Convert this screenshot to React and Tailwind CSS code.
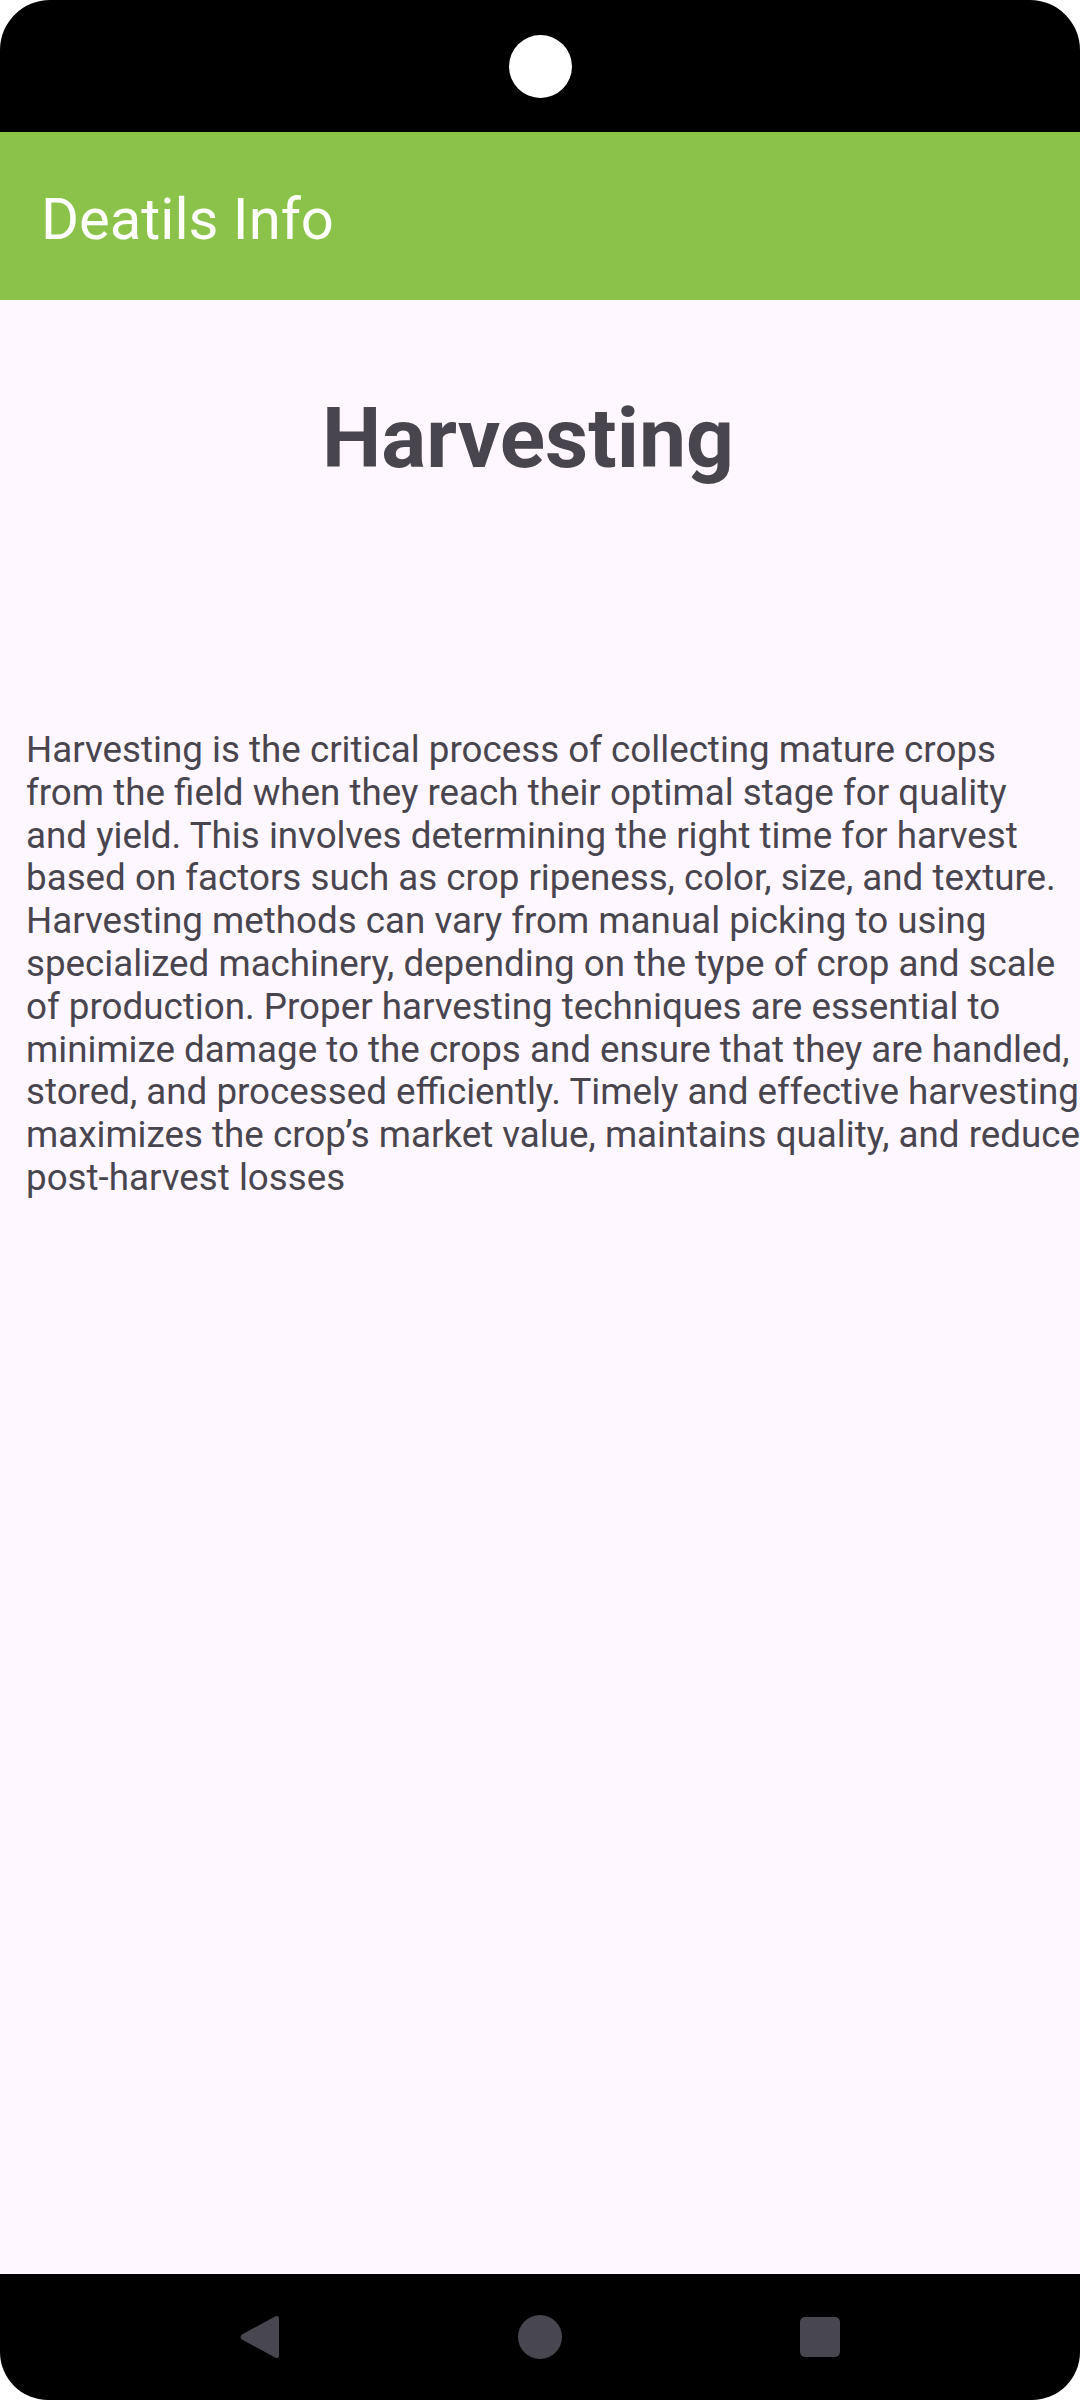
const lines = [
  'Harvesting is the critical process of collecting mature crops',
  'from the field when they reach their optimal stage for quality',
  'and yield. This involves determining the right time for harvest',
  'based on factors such as crop ripeness, color, size, and texture.',
  'Harvesting methods can vary from manual picking to using',
  'specialized machinery, depending on the type of crop and scale',
  'of production. Proper harvesting techniques are essential to',
  'minimize damage to the crops and ensure that they are handled,',
  'stored, and processed efficiently. Timely and effective harvesting',
  'maximizes the crop\u2019s market value, maintains quality, and reduces',
  'post-harvest losses',
];

const StatusBar = () => (
  <div className="h-[132px] shrink-0 bg-black rounded-t-[50px] flex items-center justify-center">
    <div className="w-[63px] h-[63px] rounded-full bg-white" />
  </div>
);

const NavBar = () => (
  <div className="h-[126px] shrink-0 bg-black rounded-b-[48px] flex items-center justify-center">
    <div className="w-[280px] flex justify-center">
      <svg width="42" height="44" viewBox="0 0 42 44">
        <path
          d="M36 1.5 Q40 -0.5 40 4 L40 40 Q40 44.5 36 42.5 L3 24.5 Q0 22 3 19.5 Z"
          fill="#48464f"
        />
      </svg>
    </div>
    <div className="w-[280px] flex justify-center">
      <div className="w-[44px] h-[44px] rounded-full bg-[#48464f]" />
    </div>
    <div className="w-[280px] flex justify-center">
      <div className="w-[40px] h-[40px] rounded-[5px] bg-[#48464f]" />
    </div>
  </div>
);

const App = () => {
  return (
    <div className="w-[1080px] h-[2400px] bg-white flex flex-col overflow-hidden font-['Roboto',sans-serif]">
      <StatusBar />

      <div className="h-[168px] shrink-0 bg-[#8bc34a] flex items-center pl-[41px] pt-[5px]">
        <h1 className="text-[58px] leading-[68px] text-white font-normal">Deatils Info</h1>
      </div>

      <div className="flex-1 bg-[#fef7ff] overflow-hidden">
        <h2 className="mt-[90px] pr-[24px] text-center text-[84px] leading-[98px] font-bold text-[#49454f]">
          Harvesting
        </h2>
        <div className="mt-[241px] pl-[26px] text-[36.75px] leading-[42.8px] text-[#49454f]">
          {lines.map((line) => (
            <div key={line} className="whitespace-nowrap">
              {line}
            </div>
          ))}
        </div>
      </div>

      <NavBar />
    </div>
  );
};

export default App;
